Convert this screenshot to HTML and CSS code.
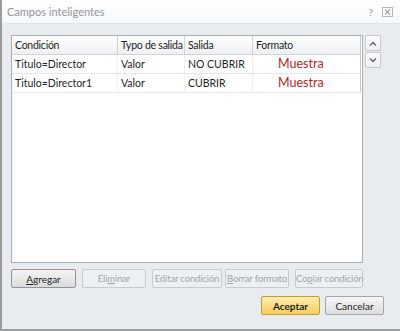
FILE: index.html
```html
<!DOCTYPE html>
<html lang="es">
<head>
  <meta charset="UTF-8">
  <title>Campos inteligentes</title>
  <link rel="stylesheet" href="styles.css">
</head>
<body>
  <div class="window">
    <!-- Title bar -->
    <div class="titlebar">
      <span class="title">Campos inteligentes</span>
      <span class="tb-icons">
        <span class="tb-help">?</span>
        <svg class="tb-close" width="11" height="10" viewBox="0 0 11 10">
          <rect x="0.5" y="0.5" width="10" height="9" fill="none" stroke="#b5b8bb"/>
          <path d="M3 2.5 L8 7.5 M8 2.5 L3 7.5" stroke="#a8abae" stroke-width="1.2"/>
        </svg>
      </span>
    </div>

    <div class="content">
      <!-- List + move buttons -->
      <div class="list-row">
        <div class="grid-box">
          <div class="grid-head">
            <div class="cell">Condición</div>
            <div class="cell">Typo de salida</div>
            <div class="cell">Salida</div>
            <div class="cell">Formato</div>
          </div>
          <div class="grid-row">
            <div class="cell">Titulo=Director</div>
            <div class="cell">Valor</div>
            <div class="cell">NO CUBRIR</div>
            <div class="cell sample">Muestra</div>
          </div>
          <div class="grid-row">
            <div class="cell">Titulo=Director1</div>
            <div class="cell">Valor</div>
            <div class="cell">CUBRIR</div>
            <div class="cell sample">Muestra</div>
          </div>
        </div>
        <div class="move-btns">
          <button class="move-btn">
            <svg width="8" height="5" viewBox="0 0 8 5"><path d="M1 4.5 L4 1.5 L7 4.5" fill="none" stroke="#5a6470" stroke-width="1.4"/></svg>
          </button>
          <button class="move-btn">
            <svg width="8" height="5" viewBox="0 0 8 5"><path d="M1 0.5 L4 3.5 L7 0.5" fill="none" stroke="#5a6470" stroke-width="1.4"/></svg>
          </button>
        </div>
      </div>

      <!-- Action buttons -->
      <div class="actions">
        <button class="btn btn-main"><u>A</u>gregar</button>
        <button class="btn btn-off" disabled>Eli<u>m</u>inar</button>
        <button class="btn btn-off btn-edit" disabled>Editar condición</button>
        <button class="btn btn-off btn-del" disabled><u>B</u>orrar formato</button>
        <button class="btn btn-off btn-copy" disabled>Co<u>p</u>iar condición</button>
      </div>

      <div class="footer">
        <button class="btn btn-ok">Aceptar</button>
        <button class="btn btn-cancel">Cancelar</button>
      </div>
    </div>
  </div>
</body>
</html>
```

FILE: styles.css
```css
body {
  margin: 0;
  padding: 0;
  font-family: Lato, "Open Sans", sans-serif;
  font-size: 11px;
  color: #1e1e1e;
  background: #e9ecee;
}

.window {
  width: 400px;
  height: 331px;
  box-sizing: border-box;
  border-left: 2px solid #9a9c9e;
  border-bottom: 2px solid #9a9c9e;
  background: #e9ecee;
  display: flex;
  flex-direction: column;
}

.titlebar {
  height: 23px;
  flex-shrink: 0;
  display: flex;
  align-items: center;
  justify-content: space-between;
  padding: 0 7px 0 5px;
  background: linear-gradient(#ffffff, #f6f7f9);
  border-bottom: 1px solid #e2e5e8;
}

.title {
  color: #939699;
  font-size: 11px;
}

.tb-icons {
  display: flex;
  align-items: center;
  gap: 9px;
}

.tb-help {
  color: #a8abae;
  font-size: 10px;
  font-weight: bold;
}

.content {
  flex: 1;
  display: flex;
  flex-direction: column;
  padding: 11px 0 0 9px;
}

.list-row {
  display: flex;
  gap: 2px;
}

.grid-box {
  width: 352px;
  height: 228px;
  box-sizing: border-box;
  border: 1px solid #a8b0b8;
  background: #ffffff;
}

.cell {
  white-space: nowrap;
  overflow: hidden;
}

.grid-head,
.grid-row {
  display: grid;
  grid-template-columns: 106px 67px 68px 107px;
  width: 348px;
  border-right: 1px solid #c4c8cc;
}

.grid-head {
  height: 18px;
  background: linear-gradient(#ffffff, #eef0f2);
  border-bottom: 1px solid #d0d4d8;
  font-size: 10.5px;
  letter-spacing: -0.25px;
}

.grid-head .cell {
  border-right: 1px solid #cfd3d7;
  line-height: 18px;
  padding-left: 3px;
}

.grid-head .cell:last-child {
  border-right: none;
}

.grid-row {
  height: 18px;
  border-bottom: 1px solid #e4e6e8;
  font-size: 10.5px;
}

.grid-row .cell {
  line-height: 18px;
  padding-left: 3px;
  border-right: 1px solid #eceef0;
}

.grid-row .cell:last-child {
  border-right: none;
}

.grid-row .sample {
  color: #b42828;
  font-size: 12.5px;
  padding-left: 25px;
}

.move-btns {
  display: flex;
  flex-direction: column;
  gap: 1px;
}

.move-btn {
  width: 16px;
  height: 16px;
  padding: 0;
  border: 1px solid #c3c8cd;
  border-radius: 2px;
  background: linear-gradient(#fbfbfc, #eef0f2);
  display: flex;
  align-items: center;
  justify-content: center;
}

.actions {
  display: flex;
  gap: 6px;
  margin-top: 6px;
}

.btn {
  height: 19px;
  padding: 0;
  font-family: inherit;
  font-size: 10px;
  border-radius: 2px;
  box-sizing: border-box;
  white-space: nowrap;
}

.btn-main {
  width: 65px;
  color: #1e1e1e;
  border: 1px solid #8f9296;
  background: linear-gradient(#f4f4f4, #dcdcdc);
}

.btn-off {
  width: 64px;
  font-size: 9.5px;
  letter-spacing: -0.15px;
  color: #a2a6aa;
  border: 1px solid #c6cbd0;
  background: #edf0f2;
}

.btn-edit {
  width: 70px;
}

.btn-del {
  width: 64px;
  margin-left: -3px;
}

.btn-copy {
  width: 68px;
}

.footer {
  display: flex;
  justify-content: flex-end;
  gap: 5px;
  margin-top: 8px;
  padding-right: 16px;
}

.btn-ok {
  width: 59px;
  font-weight: bold;
  color: #1e1e1e;
  border: 1px solid #c79a3a;
  background: linear-gradient(#fdeeb0, #f8cc5a);
}

.btn-cancel {
  width: 59px;
  color: #1e1e1e;
  border: 1px solid #a3a6aa;
  background: linear-gradient(#f6f6f6, #dddddd);
}
```
